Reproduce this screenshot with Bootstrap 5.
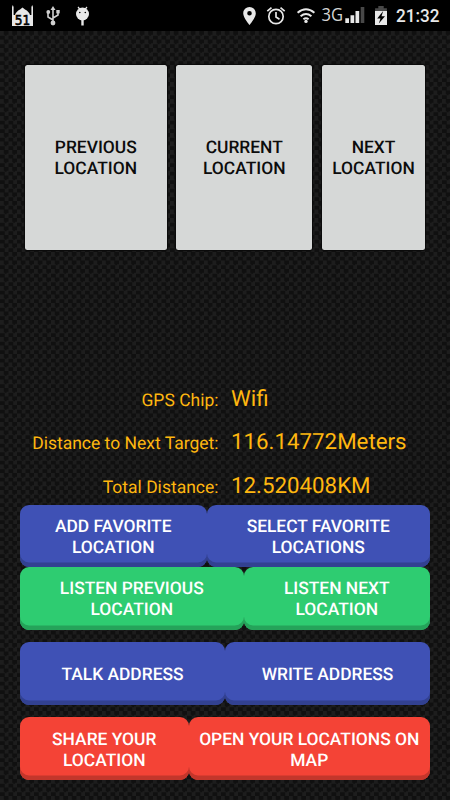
<!DOCTYPE html>
<html lang="en">
<head>
<meta charset="utf-8">
<meta name="viewport" content="width=device-width, initial-scale=1">
<title>Locations</title>
<link href="https://cdn.jsdelivr.net/npm/bootstrap@5.3.0/dist/css/bootstrap.min.css" rel="stylesheet">
<style>
body{font-family:Roboto,"Liberation Sans",sans-serif;width:450px;height:800px;background:#000;overflow:hidden}
.status{height:31px;color:#e8e8e8}
.status svg{display:block;flex:none}
.screen{height:769px;padding:34px 20px 0;background:repeating-conic-gradient(#101010 0 25%,#1d1d1d 0 50%) 0 0/8.5px 8.5px}
.places{display:grid;grid-template-columns:141.5px 136px 103px;justify-content:space-between;height:185px;margin:0 5px}
.btn{--bs-btn-font-size:17.4px;--bs-btn-font-weight:500;--bs-btn-line-height:20.8px;--bs-btn-padding-x:0;--bs-btn-padding-y:0;border:0;text-transform:uppercase;text-rendering:geometricPrecision}
.place,.place:hover{background:#d6d8d7;color:#0c0c0c;border-radius:2.5px;box-shadow:0 0 1px 1px #0a0a0a;padding-top:3px}
.readout{margin-top:126px;height:129px;color:#ffb70f;display:grid;grid-template-columns:198.5px 1fr;grid-template-rows:repeat(3,43.3px);column-gap:12.5px;align-items:baseline;text-rendering:geometricPrecision}
.readout dt{font-size:17.5px;font-weight:400}
.readout dd{font-size:22.3px;line-height:47px;margin:0}
.pair{display:grid;height:62.5px}
.act,.act:hover{color:#fff;border-radius:9px;padding:4px 0 0}
.blue,.blue:hover{background:#3f51b5;box-shadow:inset 0 -4.5px #324191}
.green,.green:hover{background:#2ecc71;box-shadow:inset 0 -4.5px #25a35a}
.red,.red:hover{background:#f44336;box-shadow:inset 0 -4.5px #c3362b}
.r1{grid-template-columns:186.5px 1fr;height:62px}
.r2{grid-template-columns:223.5px 1fr}
.r3{grid-template-columns:205px 1fr;margin-top:12.8px}
.r4{grid-template-columns:168.5px 1fr;margin-top:12.5px}
</style>
<script src="https://cdn.jsdelivr.net/npm/bootstrap@5.3.0/dist/js/bootstrap.bundle.min.js"></script>
</head>
<body>
<header class="status">
<svg width="450" height="31" viewBox="0 0 450 31" fill="#e8e8e8" font-family="Roboto, sans-serif">
<path d="M12 26V7l.8-2 .8 2v8H15q1-3.500 5-5.500L22.500 7.500l2.500 2q4 2 5 5.500h1.400V7l.8-2 .8 2v19z"/>
<text x="22.500" y="25.300" text-anchor="middle" font-family="DejaVu Sans, sans-serif" font-size="13.500" textLength="15.500" lengthAdjust="spacingAndGlyphs" stroke="#000" stroke-width=".6" fill="#000">51</text>
<g fill="none" stroke="#d0d0d0" stroke-width="1.600"><path d="M53 22V8M53 20l-5-3v-4M53 18l5-3v-4"/></g>
<g fill="#d0d0d0"><path d="M50.500 10 53 6l2.500 4z"/><circle cx="53" cy="23" r="2.400"/><circle cx="48.300" cy="12" r="1.900"/><path d="M56.300 10h3.400v3.400h-3.400z"/></g>
<circle cx="82.500" cy="14" r="6.500"/>
<path d="M78 7l2.500 3M87 7l-2.500 3" stroke="#e8e8e8" stroke-width="1.200"/>
<path d="M81.300 20h2.400v5.500h-2.400z"/><circle cx="79.800" cy="12.500" r=".8" fill="#000"/><circle cx="85.300" cy="12.500" r=".8" fill="#000"/>
<path fill-rule="evenodd" d="M249.500 7a6.300 6.300 0 0 0-6.300 6.300c0 4.700 6.300 11.700 6.300 11.700s6.300-7 6.300-11.700A6.300 6.300 0 0 0 249.500 7zm0 4a2.300 2.300 0 1 1 0 4.600 2.300 2.300 0 0 1 0-4.600z"/>
<g fill="none" stroke="#e8e8e8" stroke-width="1.700"><circle cx="276" cy="16.500" r="7.200"/><path d="M276 12v5l3.500 2.200M267.300 11.200l4.200-3.500M284.700 11.200l-4.200-3.500"/></g>
<g fill="none" stroke="#e8e8e8" stroke-width="2"><path d="M297.600 12.700q8.400-7 16.800 0M300.600 16.200q5.400-4.400 10.800 0M303.400 19.300q2.600-2 5.200 0"/></g><circle cx="306" cy="21.400" r="1.700"/>
<text x="321.500" y="21" font-family="Open Sans, sans-serif" font-size="18" fill="#d4d4d4" textLength="21.500" lengthAdjust="spacingAndGlyphs">3G</text>
<path d="M345.300 18.300h3.700V23h-3.700zM350.500 15.300h3.700V23h-3.700zM355.500 11h3.700v12h-3.700z"/><path fill="#484848" d="M360.700 7h3.600v16h-3.600z"/>
<path fill="#484848" d="M378.300 6h5.400v2.200h3.200V11h-11.800V8.200h3.200z"/><path d="M375 11h12v14h-12z"/><path fill="#000" d="m383.200 11-6 7.500h3.300l-1.700 5 6.200-7.200h-3.500z"/>
<text x="396" y="22.400" font-size="17.800" font-weight="500" textLength="43.500" lengthAdjust="spacingAndGlyphs">21:32</text>
</svg>
</header>
<main class="screen">
<div class="places">
<button class="btn place">Previous<br>Location</button>
<button class="btn place">Current<br>Location</button>
<button class="btn place">Next<br>Location</button>
</div>
<dl class="readout mb-0">
<dt class="text-end">GPS Chip:</dt><dd>Wifi</dd>
<dt class="text-end">Distance to Next Target:</dt><dd>116.14772Meters</dd>
<dt class="text-end">Total Distance:</dt><dd>12.520408KM</dd>
</dl>
<div class="pair r1"><button class="btn act blue">Add Favorite<br>Location</button><button class="btn act blue">Select Favorite<br>Locations</button></div>
<div class="pair r2"><button class="btn act green">Listen Previous<br>Location</button><button class="btn act green">Listen Next<br>Location</button></div>
<div class="pair r3"><button class="btn act blue">Talk Address</button><button class="btn act blue">Write Address</button></div>
<div class="pair r4"><button class="btn act red">Share Your<br>Location</button><button class="btn act red">Open Your Locations On<br>Map</button></div>
</main>
</body>
</html>
